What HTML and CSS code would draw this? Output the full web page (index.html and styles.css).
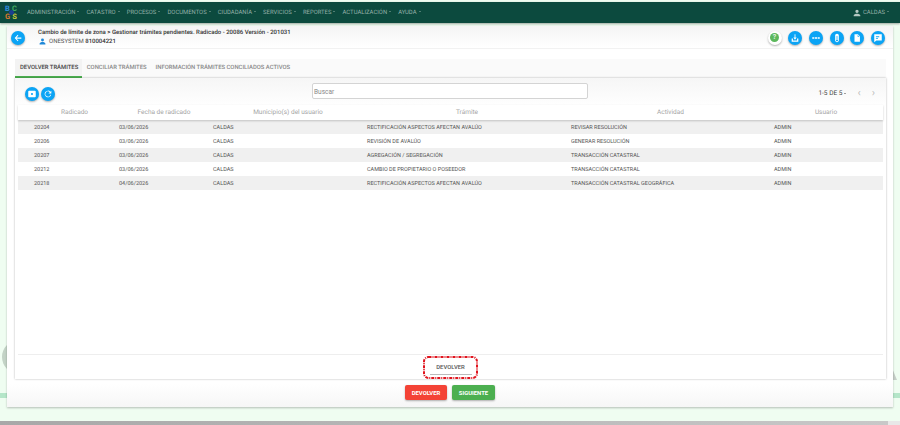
FILE: index.html
```html
<!DOCTYPE html>
<html lang="es">
<head>
    <meta charset="UTF-8">
    <meta name="viewport" content="width=device-width, initial-scale=1.0">
    <title>Devolver trámites</title>
    <link rel="stylesheet" href="styles.css">
</head>
<body>
    <div class="bg-circle"></div>
    <div class="bg-triangle"></div>
    <div class="bg-line"></div>

    <nav class="navbar">
        <div class="logo"><span class="l-b">B</span><span class="l-c">C</span><span class="l-g">G</span><span class="l-s">S</span><i class="logo-dot"></i></div>
        <ul class="menu">
            <li>ADMINISTRACIÓN</li>
            <li>CATASTRO</li>
            <li>PROCESOS</li>
            <li>DOCUMENTOS</li>
            <li>CIUDADANÍA</li>
            <li>SERVICIOS</li>
            <li>REPORTES</li>
            <li>ACTUALIZACIÓN</li>
            <li>AYUDA</li>
        </ul>
        <div class="user-menu">
            <svg class="user-icon" viewBox="0 0 24 24"><path d="M12 12a5 5 0 1 0 0-10 5 5 0 0 0 0 10zm0 2c-4 0-10 2-10 5.500V22h20v-2.500C22 16 16 14 12 14z"/></svg>
            <span class="caret-item">CALDAS</span>
        </div>
    </nav>

    <main class="main-card">
        <header class="page-header">
            <button class="round-btn back-btn">
                <svg viewBox="0 0 24 24"><path d="M20 10.500H8.500l4.500-4.500-1.600-1.600L4 12l7.400 7.600 1.600-1.600-4.500-4.500H20z"/></svg>
            </button>
            <div class="titles">
                <div class="title">Cambio de límite de zona &gt; Gestionar trámites pendientes. Radicado - 20086 Versión - 201031</div>
                <div class="subtitle">
                    <svg class="sub-icon" viewBox="0 0 24 24"><path d="M12 12a5 5 0 1 0 0-10 5 5 0 0 0 0 10zm0 2c-4 0-10 2-10 5.500V22h20v-2.500C22 16 16 14 12 14z"/></svg>
                    <span>ONESYSTEM <b>810004221</b></span>
                </div>
            </div>
            <div class="header-actions">
                <button class="round-btn help-btn"><span>?</span></button>
                <button class="round-btn">
                    <svg viewBox="0 0 24 24"><path d="M11 3h2v8h3l-4 5-4-5h3zM4 13h3v5h10v-5h3v8H4z"/></svg>
                </button>
                <button class="round-btn">
                    <svg viewBox="0 0 24 24"><path d="M3 10h5v4H3zM9.500 10h5v4h-5zM16 10h5v4h-5z"/></svg>
                </button>
                <button class="round-btn">
                    <svg viewBox="0 0 24 24"><path d="M12 2c-2.800 0-4.500 2-4.500 4.500v11C7.500 20 9.500 22 12 22s4.500-2 4.500-4.500v-11C16.500 4 14.800 2 12 2zm2.500 15c0 1.600-1 3-2.500 3s-2.500-1.400-2.500-3V7h1v9.500h3V7h1z"/></svg>
                </button>
                <button class="round-btn">
                    <svg viewBox="0 0 24 24"><path d="M6 3h8l5 5v13H6zM13.500 4.500V9H18z"/></svg>
                </button>
                <button class="round-btn">
                    <svg viewBox="0 0 24 24"><path d="M3 3h18v15H8l-5 4zM7 8v2h8V8zm0 4v2h5v-2z"/></svg>
                </button>
            </div>
        </header>

        <div class="tabs">
            <div class="tab active">DEVOLVER TRÁMITES</div>
            <div class="tab">CONCILIAR TRÁMITES</div>
            <div class="tab">INFORMACIÓN TRÁMITES CONCILIADOS ACTIVOS</div>
        </div>

        <section class="panel">
            <div class="toolbar">
                <div class="tool-btns">
                    <button class="round-btn">
                        <svg viewBox="0 0 24 24"><path d="M5 4h14a2 2 0 0 1 2 2v12a2 2 0 0 1-2 2H5a2 2 0 0 1-2-2V6a2 2 0 0 1 2-2zm7 5.500a2.500 2.500 0 1 0 0 5 2.500 2.500 0 0 0 0-5z"/></svg>
                    </button>
                    <button class="round-btn">
                        <svg viewBox="0 0 24 24"><path d="M17.700 6.300A8 8 0 1 0 19.700 14h-2.100a6 6 0 1 1-1.400-6.200L13 11h7V4z"/></svg>
                    </button>
                </div>
                <input class="search" type="text" placeholder="Buscar">
                <div class="pager">
                    <span class="caret-item">1-5 DE 5</span>
                    <span class="pager-arrow">&#8249;</span>
                    <span class="pager-arrow">&#8250;</span>
                </div>
            </div>

            <div class="table">
                <div class="row head">
                    <div>Radicado</div>
                    <div>Fecha de radicado</div>
                    <div>Municipio(s) del usuario</div>
                    <div>Trámite</div>
                    <div>Actividad</div>
                    <div>Usuario</div>
                </div>
                <div class="row">
                    <div>20204</div><div>03/06/2026</div><div>CALDAS</div>
                    <div>RECTIFICACIÓN ASPECTOS AFECTAN AVALÚO</div><div>REVISAR RESOLUCIÓN</div><div>ADMIN</div>
                </div>
                <div class="row">
                    <div>20206</div><div>03/06/2026</div><div>CALDAS</div>
                    <div>REVISIÓN DE AVALÚO</div><div>GENERAR RESOLUCIÓN</div><div>ADMIN</div>
                </div>
                <div class="row">
                    <div>20207</div><div>03/06/2026</div><div>CALDAS</div>
                    <div>AGREGACIÓN / SEGREGACIÓN</div><div>TRANSACCIÓN CATASTRAL</div><div>ADMIN</div>
                </div>
                <div class="row">
                    <div>20212</div><div>03/06/2026</div><div>CALDAS</div>
                    <div>CAMBIO DE PROPIETARIO O POSEEDOR</div><div>TRANSACCIÓN CATASTRAL</div><div>ADMIN</div>
                </div>
                <div class="row">
                    <div>20218</div><div>04/06/2026</div><div>CALDAS</div>
                    <div>RECTIFICACIÓN ASPECTOS AFECTAN AVALÚO</div><div>TRANSACCIÓN CATASTRAL GEOGRÁFICA</div><div>ADMIN</div>
                </div>
            </div>

            <div class="panel-footer">
                <div class="highlight">
                    <svg class="highlight-border" viewBox="0 0 55 23"><rect x="1" y="1" width="53" height="21" rx="4.500"/></svg>
                    <button class="flat-btn">DEVOLVER</button>
                </div>
            </div>
        </section>

        <div class="actions">
            <button class="action-btn red">DEVOLVER</button>
            <button class="action-btn green">SIGUIENTE</button>
        </div>
    </main>

    <div class="scrollbar"><div class="scroll-thumb"></div></div>
</body>
</html>
```

FILE: styles.css
```css
* {
    margin: 0;
    padding: 0;
    box-sizing: border-box;
}

html, body {
    height: 425px;
    overflow: hidden;
}

body {
    font-family: 'Roboto', 'Liberation Sans', sans-serif;
    text-rendering: geometricPrecision;
    background: #effdf1;
    color: #444;
    padding-top: 2px;
    position: relative;
}

button {
    font-family: inherit;
    border: none;
}

/* restos del fondo detras de la tarjeta */
.bg-circle {
    position: absolute;
    left: 2px;
    top: 340px;
    width: 34px;
    height: 34px;
    border-radius: 50%;
    background: #c3d3c6;
}

.bg-triangle {
    position: absolute;
    left: 892px;
    top: 368px;
    border-right: 5px solid transparent;
    border-bottom: 12px solid #c6cfc8;
}

.bg-line {
    position: absolute;
    left: 0;
    right: 0;
    top: 393px;
    height: 5px;
    background: #b5e6c9;
}

.navbar {
    height: 21px;
    background: #0c4a3e;
    display: flex;
    align-items: center;
    padding: 0 11px 0 4px;
    box-shadow: 0 1px 2px rgba(0,0,0,0.35);
    position: relative;
    z-index: 2;
}

.logo {
    width: 14px;
    height: 15px;
    display: grid;
    grid-template-columns: 1fr 1fr;
    font-size: 7.500px;
    line-height: 7.500px;
    font-weight: 700;
    text-align: center;
    position: relative;
}

.l-b { color: #2f8fe0; }
.l-c { color: #42b060; }
.l-g { color: #d9772f; }
.l-s { color: #c9cf3a; }

.logo-dot {
    position: absolute;
    left: 5px;
    top: 5px;
    width: 5px;
    height: 5px;
    border-radius: 50%;
    background: #1c3f8f;
}

.menu {
    list-style: none;
    display: flex;
    gap: 7.100px;
    margin-left: 9px;
}

.menu li, .user-menu {
    color: #93b0a8;
    font-size: 5.900px;
}

.menu li::after, .caret-item::after {
    content: "";
    display: inline-block;
    margin-left: 2px;
    vertical-align: middle;
    border-left: 1.500px solid transparent;
    border-right: 1.500px solid transparent;
    border-top: 1.500px solid currentColor;
}

.user-menu {
    margin-left: auto;
    display: flex;
    align-items: center;
    gap: 2px;
}

.user-icon {
    width: 8px;
    height: 8px;
    fill: #b5c9c3;
}

.main-card {
    position: relative;
    z-index: 1;
    margin: 3px 7px 0;
    height: 381px;
    background: linear-gradient(#fff, #fff 94%, #f6f6f6);
    box-shadow: 0 1px 2px rgba(0,0,0,0.25);
    display: flex;
    flex-direction: column;
}

.page-header {
    height: 23px;
    display: flex;
    align-items: center;
    padding: 1px 8px 0 4px;
    background: linear-gradient(#f4f4f4, #fff);
    border-bottom: 1px solid #f2f2f2;
}

.titles {
    margin-left: 13px;
    font-size: 6px;
    color: #333;
    margin-top: -1px;
}

.title {
    font-weight: 500;
    line-height: 9px;
}

.subtitle {
    display: flex;
    align-items: center;
    gap: 3px;
    color: #555;
    line-height: 9px;
}

.subtitle b {
    font-weight: 500;
    color: #333;
}

.sub-icon {
    width: 7px;
    height: 7px;
    margin-left: 1px;
    fill: #1e88d8;
}

.round-btn {
    width: 14px;
    height: 14px;
    border-radius: 50%;
    background: #0ba4f5;
    box-shadow: 0 1px 2px rgba(0,0,0,0.3);
    display: flex;
    align-items: center;
    justify-content: center;
    flex-shrink: 0;
}

.round-btn svg {
    width: 10px;
    height: 10px;
    fill: #fff;
}

.header-actions {
    margin-left: auto;
    display: flex;
    gap: 6.700px;
}

.help-btn {
    background: #fff;
}

.help-btn span {
    width: 9px;
    height: 9px;
    border-radius: 50%;
    background: #5cb85c;
    color: #e8f5e8;
    font-size: 7px;
    font-weight: 700;
    line-height: 9px;
    text-align: center;
}

.tabs {
    display: flex;
    margin: 10px 8px 0;
    height: 19px;
    background: #fafafa;
    font-size: 5.900px;
    font-weight: 500;
    color: #8a8a8a;
    width: 871px;
}

.tab {
    padding: 0 4.500px;
    line-height: 18px;
}

.tab.active {
    padding: 0 4px 0 5px;
    color: #444;
    background: #f3f3f3;
    border-bottom: 2px solid #4caf50;
    height: 19px;
}

.panel {
    margin: 0 7px 0 8px;
    height: 301px;
    background: linear-gradient(#f6f6f6, #fff 30px);
    box-shadow: 0 0 2px rgba(0,0,0,0.3);
    display: flex;
    flex-direction: column;
}

.toolbar {
    height: 27px;
    display: flex;
    align-items: center;
    padding: 3px 11px 0 10px;
    position: relative;
}

.tool-btns {
    display: flex;
    gap: 2px;
    margin-top: 2px;
}

.search {
    position: absolute;
    left: 297px;
    top: 5px;
    width: 276px;
    height: 16px;
    border: 1px solid #d4d4d4;
    border-radius: 2px;
    background: #fff;
    padding: 2px 0 0 1px;
    font-family: inherit;
    font-size: 6.500px;
}

.search::placeholder {
    color: #888;
}

.pager {
    margin-left: auto;
    display: flex;
    align-items: center;
    font-size: 6.500px;
    color: #444;
}

.pager-arrow {
    font-size: 11px;
    color: #bbb;
    line-height: 10px;
    margin-left: 11px;
}

.pager-arrow:first-of-type {
    margin-left: 10px;
}

.table {
    flex: 1;
    margin: 0 3px;
    border-bottom: 1px solid #eee;
    background: #fff;
}

.row {
    display: grid;
    grid-template-columns: 85px 94px 154px 204px 203px 124px;
    height: 14px;
    padding-top: 1px;
    align-items: center;
    font-size: 5.500px;
    color: #555;
    white-space: nowrap;
}

.row:nth-child(even) {
    background: #f0f0f0;
}

.row > div {
    padding-left: 16px;
}

.row.head {
    height: 15px;
    padding: 0 0 1px;
    font-size: 6.500px;
    color: #a5a5a5;
    text-align: center;
    background: #fff;
    box-shadow: 0 1px 2px rgba(0,0,0,0.2);
    position: relative;
}

.row.head > div {
    padding-left: 28px;
}

.row.head > div:last-child {
    padding-left: 12px;
}

.panel-footer {
    height: 24px;
    display: flex;
    justify-content: center;
    align-items: center;
}

.highlight {
    width: 55px;
    height: 23px;
    position: relative;
    display: flex;
    align-items: center;
    justify-content: center;
}

.highlight-border {
    position: absolute;
    inset: 0;
    width: 55px;
    height: 23px;
    fill: none;
    stroke: #e0141e;
    stroke-width: 2;
    stroke-dasharray: 3 1 1 1;
}

.flat-btn {
    width: 42px;
    height: 15px;
    background: #fff;
    font-size: 5.900px;
    font-weight: 500;
    color: #555;
    border-bottom: 1px solid #bbb;
}

.actions {
    display: flex;
    justify-content: center;
    gap: 5px;
    margin-top: 6px;
}

.action-btn {
    width: 43px;
    height: 15px;
    border-radius: 2px;
    color: #fff;
    font-size: 5.900px;
    font-weight: 700;
    box-shadow: 0 1px 2px rgba(0,0,0,0.3);
}

.red {
    width: 42px;
    background: #f44336;
}

.green {
    background: #4caf50;
}

.scrollbar {
    position: absolute;
    left: 0;
    right: 0;
    top: 421px;
    height: 4px;
    background: #e8e8e8;
}

.scroll-thumb {
    width: 888px;
    height: 4px;
    background: linear-gradient(90deg, #a8a8a8, #c8c8c8);
}
```
